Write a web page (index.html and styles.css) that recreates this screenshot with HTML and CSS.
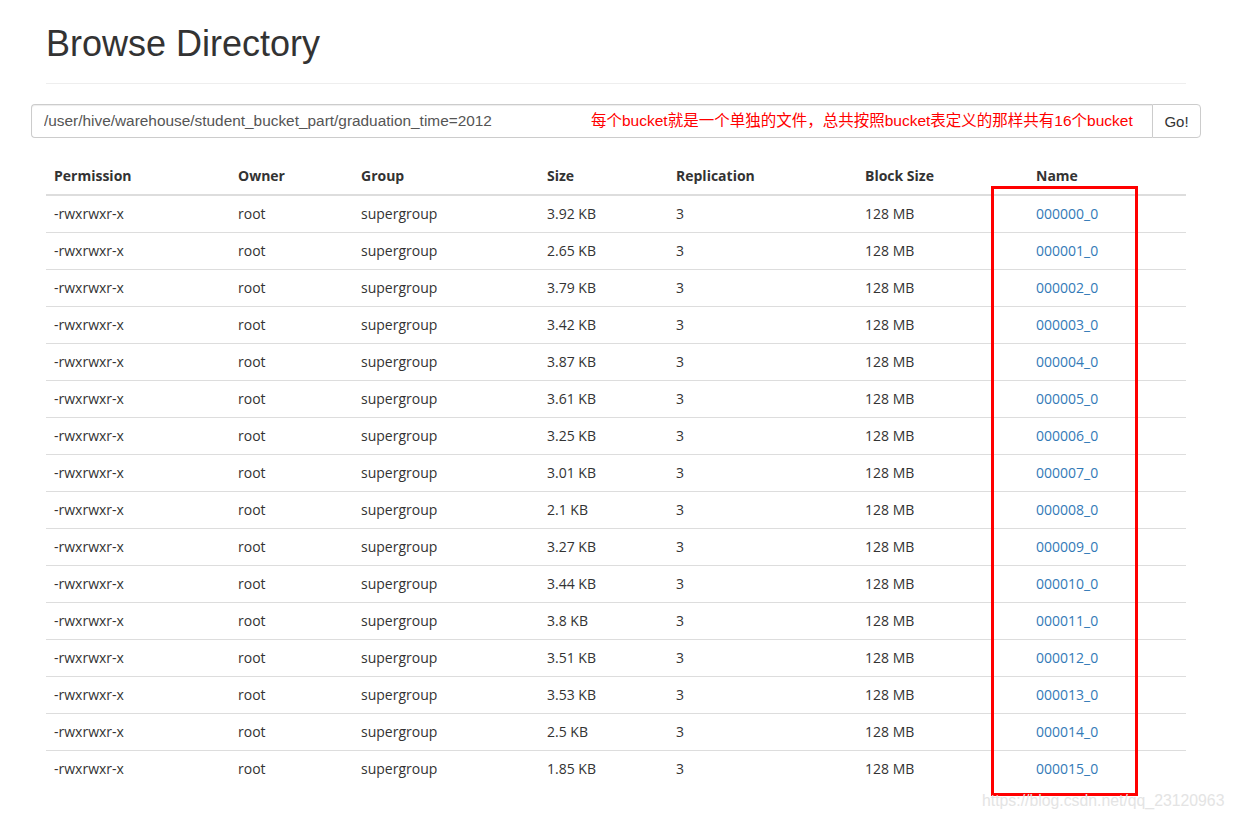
FILE: index.html
```html
<!DOCTYPE html>
<html lang="zh">
<head>
<meta charset="utf-8">
<title>Browse Directory</title>
<link rel="stylesheet" href="styles.css">
</head>
<body>
<div class="page">
  <div class="container">
    <h1 class="title">Browse Directory</h1>
    <hr class="rule">
    <div class="input-group">
      <input class="path" type="text" value="/user/hive/warehouse/student_bucket_part/graduation_time=2012">
      <button class="go">Go!</button>
      <span class="note">每个bucket就是一个单独的文件，总共按照bucket表定义的那样共有16个bucket</span>
    </div>
    <table class="listing">
      <thead>
        <tr><th class="c1">Permission</th><th class="c2">Owner</th><th class="c3">Group</th><th class="c4">Size</th><th class="c5">Replication</th><th class="c6">Block Size</th><th class="c7">Name</th></tr>
      </thead>
      <tbody>
        <tr><td>-rwxrwxr-x</td><td>root</td><td>supergroup</td><td>3.92 KB</td><td>3</td><td>128 MB</td><td><a href="#">000000_0</a></td></tr>
        <tr><td>-rwxrwxr-x</td><td>root</td><td>supergroup</td><td>2.65 KB</td><td>3</td><td>128 MB</td><td><a href="#">000001_0</a></td></tr>
        <tr><td>-rwxrwxr-x</td><td>root</td><td>supergroup</td><td>3.79 KB</td><td>3</td><td>128 MB</td><td><a href="#">000002_0</a></td></tr>
        <tr><td>-rwxrwxr-x</td><td>root</td><td>supergroup</td><td>3.42 KB</td><td>3</td><td>128 MB</td><td><a href="#">000003_0</a></td></tr>
        <tr><td>-rwxrwxr-x</td><td>root</td><td>supergroup</td><td>3.87 KB</td><td>3</td><td>128 MB</td><td><a href="#">000004_0</a></td></tr>
        <tr><td>-rwxrwxr-x</td><td>root</td><td>supergroup</td><td>3.61 KB</td><td>3</td><td>128 MB</td><td><a href="#">000005_0</a></td></tr>
        <tr><td>-rwxrwxr-x</td><td>root</td><td>supergroup</td><td>3.25 KB</td><td>3</td><td>128 MB</td><td><a href="#">000006_0</a></td></tr>
        <tr><td>-rwxrwxr-x</td><td>root</td><td>supergroup</td><td>3.01 KB</td><td>3</td><td>128 MB</td><td><a href="#">000007_0</a></td></tr>
        <tr><td>-rwxrwxr-x</td><td>root</td><td>supergroup</td><td>2.1 KB</td><td>3</td><td>128 MB</td><td><a href="#">000008_0</a></td></tr>
        <tr><td>-rwxrwxr-x</td><td>root</td><td>supergroup</td><td>3.27 KB</td><td>3</td><td>128 MB</td><td><a href="#">000009_0</a></td></tr>
        <tr><td>-rwxrwxr-x</td><td>root</td><td>supergroup</td><td>3.44 KB</td><td>3</td><td>128 MB</td><td><a href="#">000010_0</a></td></tr>
        <tr><td>-rwxrwxr-x</td><td>root</td><td>supergroup</td><td>3.8 KB</td><td>3</td><td>128 MB</td><td><a href="#">000011_0</a></td></tr>
        <tr><td>-rwxrwxr-x</td><td>root</td><td>supergroup</td><td>3.51 KB</td><td>3</td><td>128 MB</td><td><a href="#">000012_0</a></td></tr>
        <tr><td>-rwxrwxr-x</td><td>root</td><td>supergroup</td><td>3.53 KB</td><td>3</td><td>128 MB</td><td><a href="#">000013_0</a></td></tr>
        <tr><td>-rwxrwxr-x</td><td>root</td><td>supergroup</td><td>2.5 KB</td><td>3</td><td>128 MB</td><td><a href="#">000014_0</a></td></tr>
        <tr><td>-rwxrwxr-x</td><td>root</td><td>supergroup</td><td>1.85 KB</td><td>3</td><td>128 MB</td><td><a href="#">000015_0</a></td></tr>
      </tbody>
    </table>
  </div>
  <div class="highlight"></div>
  <div class="watermark">https://blog.csdn.net/qq_23120963</div>
</div>
</body>
</html>
```

FILE: styles.css
```css
html, body {
  margin: 0;
  padding: 0;
  background: #fff;
}
.page {
  position: relative;
  width: 1234px;
  height: 820px;
  overflow: hidden;
  color: #333;
  font-family: "Open Sans", "Noto Sans", sans-serif;
  font-size: 14px;
}
.container {
  width: 1140px;
  margin-left: 46px;
  padding-top: 25px;
}
.title {
  margin: 0;
  font-family: "Liberation Sans", Arial, sans-serif;
  font-weight: 400;
  font-size: 36px;
  line-height: 38px;
  color: #333;
}
.rule {
  margin: 20px 0;
  border: 0;
  border-top: 1px solid #eee;
  height: 0;
}
.input-group {
  position: relative;
  display: flex;
  margin: 0 -15px;
  height: 34px;
}
.path {
  flex: 1;
  height: 34px;
  box-sizing: border-box;
  margin: 0;
  padding: 6px 12px;
  border: 1px solid #ccc;
  border-right: 0;
  border-radius: 4px 0 0 4px;
  font-family: "Liberation Sans", Arial, sans-serif;
  font-size: 15.4px;
  color: #555;
  box-shadow: inset 0 1px 1px rgba(0,0,0,.075);
  outline: none;
}
.go {
  width: 49px;
  height: 34px;
  margin: 0;
  padding: 0;
  border: 1px solid #ccc;
  border-radius: 0 4px 4px 0;
  background: #fff;
  font-family: "Liberation Sans", Arial, sans-serif;
  font-size: 15px;
  color: #333;
}
.note {
  position: absolute;
  left: 560px;
  top: 7px;
  font-family: "Liberation Sans", "Noto Sans CJK SC", sans-serif;
  font-size: 15.5px;
  line-height: 20px;
  color: #f00;
  white-space: nowrap;
}
.listing {
  margin-top: 20px;
  width: 1140px;
  border-collapse: collapse;
  border-spacing: 0;
  table-layout: fixed;
}
.listing th,
.listing td {
  padding: 8px;
  line-height: 20px;
  text-align: left;
  vertical-align: top;
}
.listing th {
  box-sizing: border-box;
  font-weight: 700;
  border-bottom: 2px solid #ddd;
}
.listing td {
  border-top: 1px solid #ddd;
}
.c1 { width: 184px; }
.c2 { width: 123px; }
.c3 { width: 186px; }
.c4 { width: 129px; }
.c5 { width: 189px; }
.c6 { width: 171px; }
.c7 { width: 158px; }
.listing a {
  color: #337ab7;
  text-decoration: none;
}
.highlight {
  position: absolute;
  left: 991px;
  top: 186px;
  width: 141px;
  height: 604px;
  border: 3px solid #f00;
}
.watermark {
  position: absolute;
  left: 982px;
  top: 791px;
  font-family: "Liberation Sans", Arial, sans-serif;
  font-size: 15.8px;
  line-height: 20px;
  color: #e4e4e4;
  white-space: nowrap;
}
```
